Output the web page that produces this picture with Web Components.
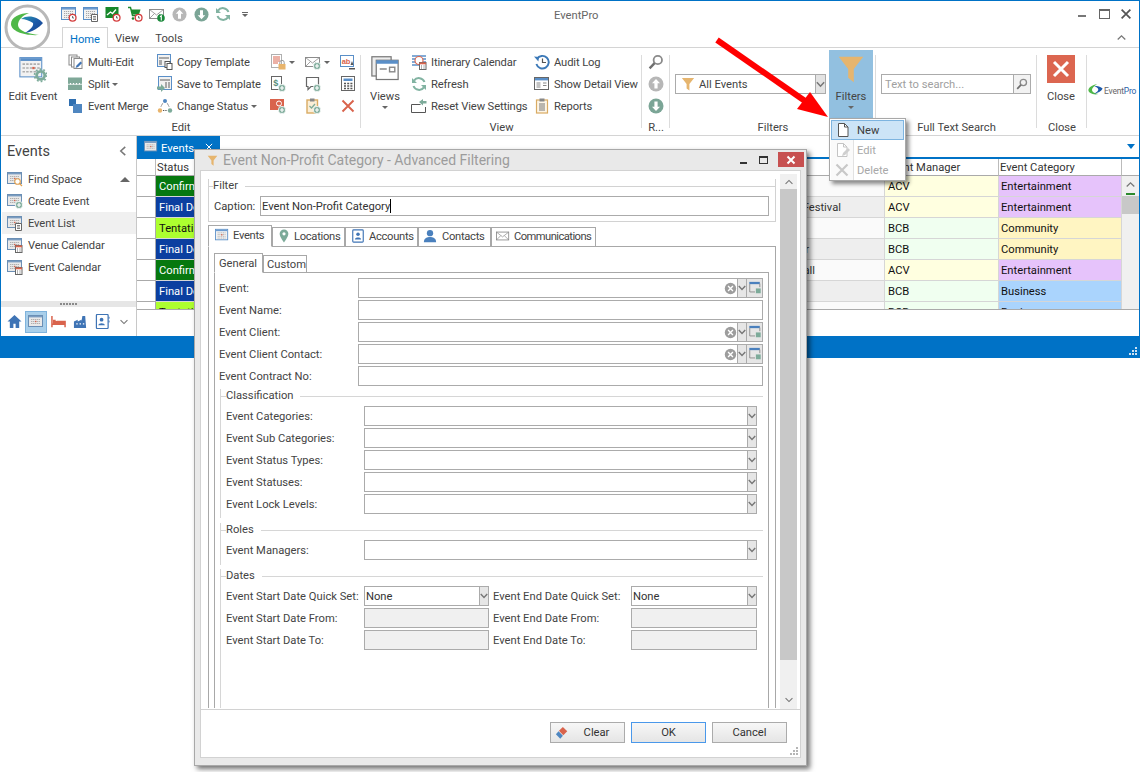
<!DOCTYPE html>
<html>
<head>
<meta charset="utf-8">
<title>EventPro</title>
<style>
  html, body { margin: 0; padding: 0; background: #fff; }
  body { width: 1140px; height: 772px; position: relative; overflow: hidden;
    font: 11.2px Roboto, "Liberation Sans", sans-serif; color: #3c3c3c; }
</style>
</head>
<body>

<ep-app>
  <ep-qat slot="qat"></ep-qat>
  <ep-ribbon slot="ribbon">
    <ep-group label="Edit" style="width:360px">
      <ep-big icon="editEvent" style="width:64px">Edit Event</ep-big>
      <ep-col style="width:89px;margin-left:3px">
        <ep-rb icon="multiEdit">Multi-Edit</ep-rb>
        <ep-rb icon="split" caret>Split</ep-rb>
        <ep-rb icon="merge">Event Merge</ep-rb>
      </ep-col>
      <ep-col style="width:113px">
        <ep-rb icon="copyTpl">Copy Template</ep-rb>
        <ep-rb icon="saveTpl">Save to Template</ep-rb>
        <ep-rb icon="status" caret>Change Status</ep-rb>
      </ep-col>
      <ep-col style="width:35px">
        <ep-rb icon="docLock" caret></ep-rb>
        <ep-rb icon="moneyPlus"></ep-rb>
        <ep-rb icon="cardPlus"></ep-rb>
      </ep-col>
      <ep-col style="width:35px">
        <ep-rb icon="mailPlus" caret></ep-rb>
        <ep-rb icon="commentPlus"></ep-rb>
        <ep-rb icon="clipPlus"></ep-rb>
      </ep-col>
      <ep-col style="width:18px">
        <ep-rb icon="spell"></ep-rb>
        <ep-rb icon="calc"></ep-rb>
        <ep-rb icon="redX"></ep-rb>
      </ep-col>
    </ep-group>
    <ep-group label="View" style="width:281px">
      <ep-big icon="views" caret style="width:48px">Views</ep-big>
      <ep-col style="width:123px;margin-left:2px">
        <ep-rb icon="itinerary">Itinerary Calendar</ep-rb>
        <ep-rb icon="refresh">Refresh</ep-rb>
        <ep-rb icon="reset">Reset View Settings</ep-rb>
      </ep-col>
      <ep-col style="width:100px">
        <ep-rb icon="audit">Audit Log</ep-rb>
        <ep-rb icon="detail">Show Detail View</ep-rb>
        <ep-rb icon="reports">Reports</ep-rb>
      </ep-col>
    </ep-group>
    <ep-group label="R..." style="width:28px">
      <ep-col style="width:16px;margin-left:6px">
        <ep-rb icon="search"></ep-rb>
        <ep-rb icon="up"></ep-rb>
        <ep-rb icon="down"></ep-rb>
      </ep-col>
    </ep-group>
    <ep-group label="Filters" style="width:206px">
      <ep-combo style="margin:23px 0 0 5px;width:151px"></ep-combo>
      <ep-big icon="funnelBig" caret active style="width:44px;height:71px;margin:-1px 0 0 3px">Filters</ep-big>
    </ep-group>
    <ep-group label="Full Text Search" style="width:161px">
      <ep-search style="margin:23px 0 0 5px;width:150px"></ep-search>
    </ep-group>
    <ep-group label="Close" style="width:50px">
      <ep-big icon="closeBig" style="width:50px;margin-left:-1px">Close</ep-big>
    </ep-group>
    <ep-brand></ep-brand>
  </ep-ribbon>
  <ep-nav slot="nav">
    <ep-nav-item icon="navFind">Find Space<ep-tri slot="end"></ep-tri></ep-nav-item>
    <ep-nav-item icon="navCreate">Create Event</ep-nav-item>
    <ep-nav-item icon="navList" selected>Event List</ep-nav-item>
    <ep-nav-item icon="navCal">Venue Calendar</ep-nav-item>
    <ep-nav-item icon="navCal">Event Calendar</ep-nav-item>
  </ep-nav>
  <ep-grid slot="main"></ep-grid>
</ep-app>

<ep-dialog>
  <ep-legend-group label="Filter" style="margin-top:8px;width:568px;margin-left:7px" closed>
    <div style="display:flex;align-items:center;height:20px;padding-left:5px;padding-bottom:5px">
      <span style="width:46px">Caption:</span>
      <ep-input value="Event Non-Profit Category" cursor style="width:509px"></ep-input>
    </div>
  </ep-legend-group>

  <ep-tabs outer style="margin:3px 0 0 7px;width:568px;height:483px">
    <ep-tab slot="tabs" active icon="tabCal" style="width:64px;--pad:6px;--gap:4px">Events</ep-tab>
    <ep-tab slot="tabs" icon="tabPin" style="width:73px;--pad:4px;--gap:3px">Locations</ep-tab>
    <ep-tab slot="tabs" icon="tabCard" style="width:73px;--pad:5px;--gap:4px">Accounts</ep-tab>
    <ep-tab slot="tabs" icon="tabUser" style="width:73px;--pad:4px;--gap:5px">Contacts</ep-tab>
    <ep-tab slot="tabs" icon="mail" style="width:105px;--pad:4px;--gap:4px;letter-spacing:-.55px">Communications</ep-tab>

    <ep-tabs style="margin:6px 0 0 5px;width:555px;height:456px">
      <ep-tab slot="tabs" active style="width:49px;--pad:4px;--pb:0px;letter-spacing:0">General</ep-tab>
      <ep-tab slot="tabs" style="width:44px;--pad:3px;--pb:0px;letter-spacing:0">Custom</ep-tab>

      <div style="padding:5px 5px 0 4px">
        <ep-field label="Event:" w="139" kind="lookup"></ep-field>
        <ep-field label="Event Name:" w="139"></ep-field>
        <ep-field label="Event Client:" w="139" kind="lookup"></ep-field>
        <ep-field label="Event Client Contact:" w="139" kind="lookup"></ep-field>
        <ep-field label="Event Contract No:" w="139"></ep-field>

        <ep-legend-group label="Classification" inner style="margin-top:1px">
          <ep-field label="Event Categories:" w="138" kind="combo"></ep-field>
          <ep-field label="Event Sub Categories:" w="138" kind="combo"></ep-field>
          <ep-field label="Event Status Types:" w="138" kind="combo"></ep-field>
          <ep-field label="Event Statuses:" w="138" kind="combo"></ep-field>
          <ep-field label="Event Lock Levels:" w="138" kind="combo"></ep-field>
          <div style="height:2px"></div>
        </ep-legend-group>
        <ep-legend-group label="Roles" inner style="margin-top:5px">
          <ep-field label="Event Managers:" w="138" kind="combo"></ep-field>
          <div style="height:3px"></div>
        </ep-legend-group>
        <ep-legend-group label="Dates" inner style="margin-top:4px;height:200px">
          <div style="display:grid;grid-template-columns:263px 264px;column-gap:4px">
            <ep-field label="Event Start Date Quick Set:" w="138" kind="combo" value="None"></ep-field>
            <ep-field label="Event End Date Quick Set:" w="138" kind="combo" value="None"></ep-field>
            <ep-field label="Event Start Date From:" w="138" disabled></ep-field>
            <ep-field label="Event End Date From:" w="138" disabled></ep-field>
            <ep-field label="Event Start Date To:" w="138" disabled></ep-field>
            <ep-field label="Event End Date To:" w="138" disabled></ep-field>
          </div>
        </ep-legend-group>
      </div>
    </ep-tabs>
  </ep-tabs>

  <ep-button slot="buttons" icon="eraser">Clear</ep-button>
  <ep-button slot="buttons" primary>OK</ep-button>
  <ep-button slot="buttons">Cancel</ep-button>
</ep-dialog>

<ep-arrow></ep-arrow>
<ep-menu></ep-menu>

<script>
// icon pieces, all drawn on a 16x16 box
const calBase = '<rect x=".5" y="1.5" width="14" height="12" fill="#f2f2f2" stroke="#5a8fc8"/><rect x="1" y="2" width="13" height="1.6" fill="#6b9bd0"/><path d="M3 5.5h9M3 7.5h9M3 9.5h9M3 11.5h9" stroke="#a9a9a9" stroke-dasharray="1.2 .8"/>';
const clock = '<circle cx="11.6" cy="11.8" r="3.4" fill="#fff" stroke="#d43c3c" stroke-width="1.3"/><path d="M11.6 10v2h1.4" stroke="#444" fill="none" stroke-width=".8"/>';
const plus = '<circle cx="12" cy="12" r="3.7" fill="#7dab9a" stroke="#fff" stroke-width=".8"/><path d="M12 9.8v4.4M9.8 12h4.4" stroke="#fff" stroke-width="1.2"/>';
const docSmall = '<path d="M8.5 8.5h6v7h-6z" fill="#fff" stroke="#666"/><path d="M10 10.5h3M10 12h3M10 13.5h3" stroke="#666" stroke-width=".8"/>';
const calSmall = '<rect x="8.5" y="8.5" width="6.5" height="7" fill="#fff" stroke="#666"/><rect x="8.5" y="8.5" width="6.5" height="1.8" fill="#d9634c"/><path d="M10 12h1M12.5 12h1M10 14h1M12.5 14h1" stroke="#666"/>';
const navBase = '<rect x=".5" y="1.5" width="14" height="11" fill="#e9e9e9" stroke="#6b8fb5"/><rect x="1" y="2" width="13" height="1.4" fill="#7a9cc0"/><path d="M3 5.5h9M3 7.5h9M3 9.5h9" stroke="#b0b0b0" stroke-dasharray="1.4 .6"/><rect x="7" y="6.8" width="1.4" height="1.4" fill="#d9634c"/>';
const envelope = '<rect x=".5" y="3.5" width="14" height="9" fill="#fff" stroke="#8c8c8c"/><path d="M.5 3.5l7 5.5 7-5.5M.5 12.5l5-5M14.5 12.5l-5-5" fill="none" stroke="#8c8c8c" stroke-width=".8"/>';
const funnel = '<path d="M1 1h14L9.6 8v7.5L6.4 13V8z" fill="#e6b56e"/>';
const circArrow = (c, d) => `<circle cx="8" cy="8" r="7.5" fill="${c}"/><path d="${d}" fill="#fff"/>`;

const ICONS = {
  qCalClock: calBase + clock,
  qCalDoc: calBase + docSmall,
  qChart: '<rect x=".5" y="1" width="13" height="11" fill="#17882b"/><path d="M2 9l3.5-3 2 1.5L11 3.5" fill="none" stroke="#fff" stroke-width="1.3"/>' + clock,
  qCart: '<path d="M1 1.5h2.5l2 8h7" fill="none" stroke="#1c8a2e" stroke-width="1.4"/><path d="M4 3.5h9.5l-1.5 5H5.4z" fill="#1c8a2e"/><circle cx="6" cy="12.5" r="1.3" fill="#1c8a2e"/>' + clock,
  qMail: envelope + '<circle cx="12" cy="12" r="3.8" fill="#1c8a3c"/><path d="M11 10.8l1.3-1v4.6" fill="none" stroke="#fff" stroke-width="1.1"/>',
  up: circArrow('#b7b7b7', 'M8 3l4 4.2H9.6V12.5H6.4V7.2H4z'),
  down: circArrow('#7ba596', 'M8 13L4 8.8h2.4V3.5h3.2v5.3H12z'),
  refresh: '<path d="M13.5 6A6 6 0 0 0 3 4.6M2.5 10A6 6 0 0 0 13 11.4" fill="none" stroke="#82b3a2" stroke-width="2"/><path d="M1 2v5h5zM15 14V9h-5z" fill="#82b3a2"/>',
  editEvent: '<rect x=".5" y="1.5" width="12.5" height="11" fill="#f2f2f2" stroke="#5a8fc8" stroke-width=".6"/><rect x=".8" y="1.8" width="12" height="1.6" fill="#5a8fc8"/><path d="M2 5.2h10M2 7.4h10M2 9.6h10" stroke="#aeaeae" stroke-dasharray="1.4 .7" stroke-width=".9"/><rect x="7.6" y="6.8" width="1.3" height="1.3" fill="#d9634c"/><circle cx="12.4" cy="11.6" r="2.3" fill="none" stroke="#7dab9a" stroke-width="1.6"/><circle cx="12.4" cy="11.6" r="3.5" fill="none" stroke="#7dab9a" stroke-width="1" stroke-dasharray="1 1.2"/>',
  multiEdit: '<rect x="1" y="1" width="8" height="10" fill="#fff" stroke="#8a8a8a"/><rect x="3.5" y="3" width="8" height="10" fill="#fff" stroke="#8a8a8a"/><rect x="6" y="4.5" width="8" height="10" fill="#fff" stroke="#8a8a8a"/><path d="M7.5 14l1-2.6L12.5 7.5l1.6 1.6-4 4z" fill="#3f74b5"/>',
  split: '<rect y="1.5" width="14" height="5.5" fill="#7fa898"/><rect y="8.5" width="14" height="5.5" fill="#7fa898"/><rect y="7" width="14" height="1.5" fill="#fff"/><path d="M0 7.7h14" stroke="#7fa898" stroke-dasharray="2 1"/>',
  merge: '<rect x="1" y="1" width="7" height="7" fill="#2f6fb0"/><rect x="5" y="6" width="9" height="9" fill="#4f86c0"/>',
  copyTpl: '<rect x=".5" y=".5" width="13" height="12" fill="#f2f2f2" stroke="#5a8fc8"/><path d="M2 3h10v2H2zM2 6h3v5H2z" fill="#a8a8a8"/><rect x="8" y="7.5" width="5" height="6" fill="#fff" stroke="#555"/><rect x="10" y="9.5" width="5" height="6" fill="#fff" stroke="#555"/>',
  saveTpl: '<rect x="1.5" y=".5" width="13" height="13" fill="#f2f2f2" stroke="#5a8fc8"/><path d="M3 3h10v2H3zM8 6h2v6H8zM11 6h2v6h-2z" fill="#a8a8a8"/><path d="M0 10.5h4V8l4 4-4 4v-2.5H0z" fill="#7dab9a"/>',
  status: '<circle cx="8" cy="3" r="2" fill="#4f86c0"/><circle cx="3" cy="12.5" r="2.2" fill="#e8b46c"/><circle cx="13" cy="12.5" r="2.2" fill="#7dab9a"/><path d="M5.6 5.5L4 8.5M10.4 5.5L12 8.5M6 12.5h4" stroke="#555" stroke-dasharray="1.3 1"/>',
  docLock: '<rect x="1.5" y=".5" width="10" height="13" fill="#fff" stroke="#b0b0b0"/><path d="M3 3h7M3 5h7M3 7h7M3 9h5" stroke="#d9634c"/><path d="M9.8 10V8.5a2.2 2.2 0 0 1 4.4 0V10" fill="none" stroke="#999"/><rect x="8.5" y="10" width="7" height="5.5" fill="#e8b46c"/>',
  moneyPlus: '<rect x="1.5" y=".5" width="10" height="13" fill="#fff" stroke="#666"/><text x="3.3" y="10" font-size="9" font-family="Liberation Sans" font-weight="bold" fill="#5a8f7c">$</text>' + plus,
  cardPlus: '<rect y="1" width="14" height="11" fill="#d9634c"/><circle cx="9" cy="5.5" r="2.5" fill="none" stroke="#fff"/>' + plus,
  mailPlus: envelope + plus,
  commentPlus: '<path d="M1.5 1.5h12v9H6l-3 3v-3H1.5z" fill="#fff" stroke="#666" stroke-width="1.2"/>' + plus,
  clipPlus: '<rect x="2" y="2" width="10.5" height="13" fill="#fbeed6" stroke="#d9ab63" stroke-width="1.4"/><rect x="5" y=".5" width="4.5" height="3" fill="#888"/><path d="M4.5 8l2 2 3.5-4" fill="none" stroke="#7dab9a" stroke-width="1.3"/>' + plus,
  spell: '<rect x=".5" y="1.5" width="13" height="11" fill="#fff" stroke="#5a8fc8"/><text x="1.8" y="9.5" font-size="7.5" font-family="Liberation Sans" font-weight="bold" fill="#d9634c">ab</text><path d="M12 7l-1.5 4h3zM9 14h6v1.5H9z" fill="#555"/>',
  calc: '<rect x="1.5" y=".5" width="13" height="14" fill="#fff" stroke="#666"/><rect x="3.5" y="2.5" width="9" height="2.5" fill="#5a8fc8"/><path d="M4 7.5h2M7.2 7.5h2M10.4 7.5h2M4 10h2M7.2 10h2M10.4 10h2M4 12.5h2M7.2 12.5h2M10.4 12.5h2" stroke="#555" stroke-width="1.4"/>',
  redX: '<path d="M2.5 2.5l11 11M13.5 2.5l-11 11" stroke="#d9634c" stroke-width="1.9"/>',
  views: '<rect x=".5" y="1" width="11" height="11" fill="#eee" stroke="#777" stroke-width=".7"/><rect x="3" y="3" width="12.5" height="11" fill="#fff" stroke="#777" stroke-width=".7"/><rect x="3" y="3" width="12.5" height="2" fill="#5a8fc8"/><path d="M5 8h4" stroke="#999" stroke-width="1"/><rect x="10.6" y="7" width="3" height="2.6" fill="none" stroke="#888" stroke-width=".8"/>',
  itinerary: '<path d="M1 2h14M1 5h14M1 8h14M1 11h14" stroke="#5a8fc8" stroke-width="1.4"/><circle cx="8" cy="6.5" r="4" fill="#fff" stroke="#d9634c" stroke-width="1.1"/>' + calSmall,
  reset: '<path d="M.5 6.5h9M.5 6.5v8h14V9" fill="none" stroke="#555"/><path d="M8 4l4-3v2h3.5v2.5H12v2z" fill="#7dab9a"/>',
  audit: '<path d="M3 5a6.3 6.3 0 1 1-.6 5" fill="none" stroke="#3c79b8" stroke-width="1.9"/><path d="M0 2.4l5 .6-.6 4.6z" fill="#3c79b8"/><path d="M8.5 4.5v4H12" fill="none" stroke="#555" stroke-width="1.2"/>',
  detail: '<rect x=".5" y="1.5" width="14" height="12" fill="#fff" stroke="#666"/><rect x="1" y="2" width="13" height="2.4" fill="#5a8fc8"/><path d="M2.5 7h4M2.5 9h4M2.5 11h4M9 7h3.5M9 9.5h3.5" stroke="#888"/>',
  reports: '<rect x="2.5" y="2" width="11" height="13" fill="#fdf5e6" stroke="#d9ab63" stroke-width="1.2"/><rect x="5.5" y=".5" width="5" height="3" fill="#888"/><path d="M5 6h6M5 8h6M5 10h6M5 12h6" stroke="#777"/>',
  search: '<circle cx="9.8" cy="6" r="4.2" fill="none" stroke="#8a8a8a" stroke-width="1.8"/><path d="M6.6 9.2L1.6 14.4" stroke="#6f6f6f" stroke-width="2.4"/>',
  funnelBig: funnel,
  funnel,
  closeBig: '<rect width="16" height="16" fill="#dc6650"/><path d="M4 4l8 8M12 4l-8 8" stroke="#fff" stroke-width="1.7"/>',
  navFind: navBase + '<circle cx="10.5" cy="10.5" r="2.8" fill="#fff" stroke="#e0a050" stroke-width="1.1"/><path d="M12.5 12.5l2.5 2.5" stroke="#e0a050" stroke-width="1.3"/>',
  navCreate: navBase + plus,
  navList: navBase + docSmall,
  navCal: navBase + calSmall,
  navHome: '<path d="M8 1L.5 8H3v7h3.8v-4.5h2.4V15H13V8h2.5z" fill="#3f74b5"/>',
  navEvents: navBase,
  navBed: '<path d="M1 2v12M1 11h14v3M15 11V8H6" stroke="#d9634c" stroke-width="1.6" fill="none"/><path d="M5 7.5h10V11H2V6h3z" fill="#d9634c"/>',
  navPlant: '<path d="M1 15V8l4-2v2l4-2v2l1-6h3l1 13z" fill="#3f74b5"/><path d="M3.5 10.5h1.5M7 10.5h1.5M10.5 10.5h1.5" stroke="#fff" stroke-width="1.4"/>',
  navCard: '<rect x="1.5" y=".5" width="12.5" height="15" rx="1" fill="#fff" stroke="#3f74b5" stroke-width="1.3"/><circle cx="7" cy="6" r="2" fill="#3f74b5"/><path d="M3.5 12c0-3 7-3 7 0z" fill="#3f74b5"/><path d="M15 3v2M15 7v2" stroke="#3f74b5"/>',
  tabCal: calBase + '<rect x="7" y="7" width="1.5" height="1.5" fill="#d9634c"/>',
  tabPin: '<path d="M8 .5a5 5 0 0 0-5 5c0 3.5 5 10 5 10s5-6.5 5-10a5 5 0 0 0-5-5z" fill="#7dab9a"/><circle cx="8" cy="5.5" r="1.8" fill="#fff"/>',
  tabCard: '<rect x="2" y="1" width="12" height="14" rx="1" fill="#fff" stroke="#3f74b5" stroke-width="1.3"/><circle cx="8" cy="6" r="2" fill="#3f74b5"/><path d="M4.5 12c0-3 7-3 7 0z" fill="#3f74b5"/>',
  tabUser: '<circle cx="8" cy="4.8" r="3.6" fill="#4a80bd"/><path d="M1 15c0-5 4-6 7-6s7 1 7 6z" fill="#4a80bd"/>',
  mail: envelope,
  eraser: '<path d="M9 1l5 5-4.5 4.5-5-5z" fill="#d9634c"/><path d="M4 6l5 5-3 3.5-5-5z" fill="#4f86c0"/>',
  doc: '<path d="M3.5 1.5h6l3.5 3.5v9.500H3.500z" fill="#fff" stroke="#555"/><path d="M9.5 1.5V5H13" fill="none" stroke="#555"/>',
  docEdit: '<path d="M3.5 1.5h6l3.5 3.5v9.500H3.500z" fill="#fff" stroke="#c4c4c4"/><path d="M9.5 1.5V5H13" fill="none" stroke="#c4c4c4"/><path d="M8 14l1-3 5-5 2 2-5 5z" fill="#cfcfcf"/>',
  grayX: '<path d="M2.5 2.5l11 11M13.5 2.5l-11 11" stroke="#c8c8c8" stroke-width="2.2"/>',
  windowPick: '<rect x="1.5" y="1" width="12" height="2.6" fill="#4a80bd"/><path d="M2 3.5v9h6" fill="none" stroke="#888"/><path d="M13.5 3v4" stroke="#888"/><rect x="9" y="8.5" width="5.5" height="5.5" fill="#7dab9a"/>',
  clearX: '<circle cx="8" cy="8" r="7" fill="#9d9d9d"/><path d="M5 5l6 6M11 5l-6 6" stroke="#fff" stroke-width="1.7"/>',
  chevDown: '<path d="M2.5 5L8 10.5 13.5 5" fill="none" stroke="#777" stroke-width="1.8"/>',
  chevThick: '<path d="M1.5 4L8 11 14.500 4" fill="none" stroke="#777" stroke-width="2.8"/>',
  chevUp: '<path d="M2.5 11L8 5.5 13.5 11" fill="none" stroke="#777" stroke-width="1.8"/>',
  chevLeft: '<path d="M11 2.5L5 8l6 5.5" fill="none" stroke="#777" stroke-width="2"/>',
  winClose: '<path d="M3 3l10 10M13 3L3 13" stroke="#555" stroke-width="2"/>',
  tabClose: '<path d="M3 3l10 10M13 3L3 13" stroke="#fff" stroke-width="1.6"/>'
};

const LOGO = '<svg width="46" height="46" viewBox="4 4 46 46"><defs><linearGradient id="lg" x1="0" y1="0" x2="1" y2="1"><stop offset="0" stop-color="#2b9bb0"/><stop offset=".5" stop-color="#1d5aa8"/><stop offset="1" stop-color="#173f8c"/></linearGradient></defs><circle cx="27.500" cy="27.500" r="21.500" fill="#fff" stroke="#b8b8b8" stroke-width="3"/><path d="M29 13C20 13 11 17 11 24c0 7 13 12 28 11-10-1-21-4-21-10 0-5 5-10 11-12z" fill="#4fb848"/><path d="M21 19c7-5 17-2 22 4-4 5-11 9-18 10 5-3 9-7 8-10-3-2-8-4-12-4z" fill="url(#lg)"/></svg>';

function define(name, markup, init) {
  customElements.define(name, class extends HTMLElement {
    constructor() {
      super();
      this.attachShadow({mode: "open"});
    }
    connectedCallback() {
      if (this.done) return;
      this.done = true;
      this.shadowRoot.innerHTML = typeof markup === "function" ? markup(this) : markup;
      if (init) init(this);
    }
  });
}

define("ep-icon", el => {
  const s = el.getAttribute("size") || 16;
  return `<style>:host{display:inline-flex;flex:none}svg{display:block}</style>
    <svg width="${s}" height="${s}" viewBox="0 0 16 16">${ICONS[el.getAttribute("name")] || ""}</svg>`;
});

define("ep-tri", `<style>:host{display:block;width:0;height:0;border:5px solid transparent;border-top:0;border-bottom:5px solid #666;margin-right:6px}</style>`);

define("ep-caret", `<style>:host{display:inline-block;width:0;height:0;border:3px solid transparent;border-bottom:0;border-top:3px solid #666}</style>`);

define("ep-app", `
  <style>
    :host { display: flex; flex-direction: column; width: 1140px; height: 358px; box-sizing: border-box;
      border: 1px solid #0072c6; border-bottom: 0; position: relative; }
    .logo { position: absolute; left: 3px; top: 3px; z-index: 2; height: 46px; }
    .top { height: 27px; display: flex; align-items: center; }
    .title { color: #666; white-space: nowrap; padding-top: 2px; }
    .wc { margin-left: auto; display: flex; align-items: center; gap: 8px; padding-right: 6px; }
    .tabs { height: 20px; display: flex; border-bottom: 1px solid #d4d4d4; padding-left: 61px; position: relative; }
    .tab { display: flex; align-items: center; justify-content: center; color: #444; padding-top: 2px; box-sizing: border-box; }
    .on { height: 21px; border: 1px solid #d4d4d4; border-bottom: 0; background: #fff; color: #0072c6; }
    .fold { margin-left: auto; margin-right: 12px; display: flex; align-items: center; }
    .body { height: 200px; display: flex; }
    .status { height: 22px; margin: 0 -1px; background: #0072c6; position: relative; }
    .grip { position: absolute; right: 2px; bottom: 2px; }
    slot[name=main] { display: block; }
  </style>
  <div class="logo">${LOGO}</div>
  <div class="top">
    <slot name="qat"></slot>
    <div class="title">EventPro</div>
    <div class="wc">
      <svg width="14" height="14"><rect x="3" y="8" width="8" height="2" fill="#777"/></svg>
      <svg width="14" height="14"><rect x="2.500" y="2.500" width="10" height="9" fill="none" stroke="#666"/><rect x="2" y="2" width="11" height="2" fill="#666"/></svg>
      <ep-icon name="winClose" size="14"></ep-icon>
    </div>
  </div>
  <div class="tabs">
    <div class="tab on" style="width:46px">Home</div>
    <div class="tab" style="width:38px">View</div>
    <div class="tab" style="width:46px">Tools</div>
    <div class="fold"><ep-icon name="chevUp" size="11"></ep-icon></div>
  </div>
  <slot name="ribbon"></slot>
  <div class="body">
    <slot name="nav"></slot>
    <slot name="main"></slot>
  </div>
  <div class="status">
    <svg class="grip" width="9" height="9" fill="#cfe2f3"><path d="M6 0h2v2H6zM3 3h2v2H3zM6 3h2v2H6zM0 6h2v2H0zM3 6h2v2H3zM6 6h2v2H6z"/></svg>
  </div>
`);

define("ep-qat", el => {
  const names = ["qCalClock", "qCalDoc", "qChart", "qCart", "qMail", "up", "down", "refresh"];
  return `<style>
      :host { display: flex; align-items: center; width: 553px; box-sizing: border-box; padding-left: 57px; }
      span { width: 22px; display: flex; justify-content: center; }
      .more { display: flex; flex-direction: column; align-items: center; gap: 1px; }
      .more i { display: block; width: 6px; height: 1px; background: #666; }
    </style>
    ${names.map(n => `<span><ep-icon name="${n}" size="${n === "up" || n === "down" ? 15 : 16}"></ep-icon></span>`).join("")}
    <span class="more"><i></i><ep-caret></ep-caret></span>`;
});

define("ep-ribbon", `
  <style>:host { display: flex; height: 88px; box-sizing: border-box; border-bottom: 1px solid #d4d4d4; }</style>
  <slot></slot>
`);

define("ep-group", el => `
  <style>
    :host { display: flex; flex-direction: column; flex: none; height: 87px; box-sizing: border-box; padding-top: 3px; position: relative; }
    :host::after { content: ""; position: absolute; right: 0; top: 7px; bottom: 7px; width: 1px; background: #dcdcdc; }
    .c { height: 67px; display: flex; align-items: flex-start; }
    .l { height: 17px; line-height: 19px; text-align: center; color: #444; white-space: nowrap; overflow: hidden; }
  </style>
  <div class="c"><slot></slot></div>
  <div class="l">${el.getAttribute("label")}</div>
`);

define("ep-col", `<style>:host { display: flex; flex-direction: column; flex: none; }</style><slot></slot>`);

define("ep-rb", el => {
  const hasText = el.textContent.trim() !== "";
  return `<style>
    :host { display: flex; align-items: center; height: 22px; gap: 4px; white-space: nowrap; color: #444; letter-spacing: -.12px; }
    .t { padding-top: 1px; }
    ep-caret { margin-left: -1px; }
  </style>
  <ep-icon name="${el.getAttribute("icon")}"></ep-icon>
  ${hasText ? '<span class="t"><slot></slot></span>' : ""}
  ${el.hasAttribute("caret") ? "<ep-caret></ep-caret>" : ""}`;
});

define("ep-big", el => `
  <style>
    :host { display: flex; flex-direction: column; align-items: center; flex: none; box-sizing: border-box; color: #444; white-space: nowrap;
      padding-top: 4px; ${el.hasAttribute("active") ? "background:#92c0e0;padding-top:5px;" : ""} }
    .t { margin-top: 7px; height: 14px; line-height: 14px; }
    ep-caret { margin-top: 2px; }
  </style>
  <ep-icon name="${el.getAttribute("icon")}" size="28"></ep-icon>
  <div class="t"><slot></slot></div>
  ${el.hasAttribute("caret") ? "<ep-caret></ep-caret>" : ""}
`);

define("ep-combo", `
  <style>
    :host { display: flex; align-items: center; box-sizing: border-box; height: 20px; flex: none; border: 1px solid #ababab; color: #444; }
    ep-icon { margin: 0 4px 0 5px; }
    span { flex: 1; }
    .b { width: 9px; height: 18px; background: #e3e3e3; border-left: 1px solid #ababab; display: flex; align-items: center; }
  </style>
  <ep-icon name="funnel" size="14"></ep-icon><span>All Events</span>
  <div class="b"><ep-icon name="chevThick" size="9" style="margin:0"></ep-icon></div>
`);

define("ep-search", `
  <style>
    :host { display: flex; align-items: center; box-sizing: border-box; height: 20px; flex: none; border: 1px solid #ababab; color: #a0a0a0; }
    span { flex: 1; padding-left: 3px; }
    .b { width: 16px; height: 18px; background: #f2f2f2; border-left: 1px solid #ababab; display: flex; align-items: center; justify-content: center; }
  </style>
  <span>Text to search...</span>
  <div class="b"><ep-icon name="search" size="12"></ep-icon></div>
`);

define("ep-brand", `
  <style>
    :host { display: flex; align-items: center; height: 71px; padding-left: 1px; flex: none; margin-top: 7px; gap: 1px; }
    b { font: 400 8.500px Roboto, sans-serif; letter-spacing: -.2px; color: #666; }
    b i { font-style: normal; color: #2b62a8; }
  </style>
  <svg width="15" height="15" viewBox="8 8 38 38"><path d="M31 11C19 13 9 19 9 26c0 8 13 13 25 10C24 34 18 31 18 26c0-5 6-12 13-15z" fill="#4fb848"/><path d="M24 16c8-2 15 1 21 6-3 7-13 12-21 13 6-3 11-8 10-11-1-4-5-7-10-8z" fill="#1d5aa8"/></svg>
  <b>Event<i>Pro</i></b>
`);

define("ep-nav", `
  <style>
    :host { display: flex; flex-direction: column; width: 136px; height: 200px; box-sizing: border-box; border-right: 1px solid #c8c8c8; flex: none; }
    .h { display: flex; align-items: center; justify-content: space-between; height: 32px; box-sizing: border-box; padding: 0 7px 2px 6px; font-size: 14.500px; color: #444; flex: none; }
    .list { flex: 1; }
    .dots { height: 6px; background: #e6e6e6; display: flex; justify-content: center; align-items: center; gap: 1px; }
    .dots i { width: 2px; height: 2px; background: #8a8a8a; }
    .bar { height: 29px; display: flex; align-items: center; padding-left: 2px; }
    .bar span { width: 22px; height: 22px; display: flex; align-items: center; justify-content: center; box-sizing: border-box; }
    .bar .on { background: #a9cfea; border: 1px solid #7fb3dc; }
  </style>
  <div class="h"><span>Events</span><ep-icon name="chevLeft" size="12"></ep-icon></div>
  <div class="list"><slot></slot></div>
  <div class="dots"><i></i><i></i><i></i><i></i><i></i><i></i></div>
  <div class="bar">
    <span><ep-icon name="navHome" size="15"></ep-icon></span>
    <span class="on"><ep-icon name="navEvents" size="16"></ep-icon></span>
    <span><ep-icon name="navBed" size="15"></ep-icon></span>
    <span><ep-icon name="navPlant" size="15"></ep-icon></span>
    <span><ep-icon name="navCard" size="15"></ep-icon></span>
    <span><ep-icon name="chevDown" size="10"></ep-icon></span>
  </div>
`);

define("ep-nav-item", el => `
  <style>
    :host { display: flex; align-items: center; height: 22px; margin-left: 1px; padding-left: 5px; gap: 5px; color: #444; letter-spacing: -.12px;
      ${el.hasAttribute("selected") ? "background:#f0f0f0;" : ""} }
    .end { margin-left: auto; }
  </style>
  <ep-icon name="${el.getAttribute("icon")}"></ep-icon><slot></slot>
  <div class="end"><slot name="end"></slot></div>
`);

define("ep-grid", el => {
  const ST = {
    c: ["Confirm", "#06780f", "#fff"],
    f: ["Final De", "#0b3fa0", "#fff"],
    t: ["Tentati", "#adff2f", "#111"]
  };
  const CAT = { E: ["Entertainment", "#e6c3fb"], C: ["Community", "#fff5c2"], B: ["Business", "#aad4fd"] };
  const MGR = { A: ["ACV", "#ffffe0"], B: ["BCB", "#f0fff0"] };
  // row: status, visible end of the name, right offset of that text, manager, category
  const rows = [
    ["c", "t", 77, "A", "E"], ["f", "Festival", 43, "A", "E"], ["t", "", 0, "B", "C"],
    ["f", "r", 75, "B", "C"], ["c", "all", 69, "A", "E"], ["f", "n", 77, "B", "B"], ["t", "", 0, "B", "B"]
  ];
  const cells = rows.map((r, i) => {
    const s = ST[r[0]], m = MGR[r[3]], c = CAT[r[4]], alt = i % 2 ? "#eeeeee" : "#fafafa";
    return `<div class="c ind"></div>
      <div class="c" style="background:${s[1]};color:${s[2]}">${s[0]}</div>
      <div class="c nm" style="background:${alt};padding-right:${r[2]}px">${r[1]}</div>
      <div class="c" style="background:${m[1]}">${m[0]}</div>
      <div class="c" style="background:${c[1]};padding-left:2px">${c[0]}</div>`;
  }).join("");
  return `<style>
      :host { display: flex; flex-direction: column; width: 1002px; height: 200px; color: #111; }
      .strip { height: 23px; box-sizing: border-box; display: flex; align-items: flex-end; border-bottom: 2px solid #0072c6; flex: none; position: relative; }
      .tab { width: 83px; height: 21px; background: #0072c6; color: #fff; display: flex; align-items: center; box-sizing: border-box; padding-left: 7px; gap: 3px; }
      .tab span { padding-top: 3px; }
      .tab .cl { margin-left: auto; margin-right: 6px; }
      .more { margin-left: auto; align-self: center; width: 0; height: 0; border: 4px solid transparent; border-bottom: 0; border-top: 5px solid #0072c6; margin-right: 4px; }
      .g { display: grid; grid-template-columns: 19px 104px 625px 114px 123px 17px; grid-auto-rows: 21px; grid-template-rows: 17px; height: 151px; overflow: hidden; border-bottom: 1px solid #aaa; box-sizing: border-box; flex: none; }
      .hd { border-right: 1px solid #bbb; border-bottom: 1px solid #aaa; padding-left: 1px; line-height: 18px; color: #333; white-space: nowrap; }
      .c { border-right: 1px solid #d6d6d6; border-bottom: 1px solid #d6d6d6; padding-left: 3px; padding-top: 1px; line-height: 20px; white-space: nowrap; overflow: hidden; grid-column: auto; }
      .ind { padding: 0; border-right-color: #aaa; border-bottom-color: #aaa; background: #fff; }
      .nm { text-align: right; padding-left: 0; color: #333; }
      .sb { grid-column: 6; grid-row: 2 / span 7; background: #f0f0f0; display: flex; flex-direction: column; align-items: center; }
      .sb .tick { width: 9px; height: 2px; background: #2c8a2c; margin-top: 3px; }
      .sb .th { width: 100%; height: 18px; background: #c8c8c8; margin-top: 1px; }
      .sb .dn { margin-top: 94px; }
      .sb .up { margin-top: 3px; }
    </style>
    <div class="strip">
      <div class="tab"><ep-icon name="navEvents" size="14"></ep-icon><span>Events</span><ep-icon class="cl" name="tabClose" size="10"></ep-icon></div>
      <div class="more"></div>
    </div>
    <div class="g">
      <div class="hd"></div><div class="hd">Status</div><div class="hd"></div>
      <div class="hd">Event Manager</div><div class="hd">Event Category</div><div class="hd" style="border-right:0"></div>
      ${cells}
      <div class="sb" style="grid-row:2/span 7"><ep-icon class="up" name="chevUp" size="11"></ep-icon><i class="tick"></i><i class="th"></i><ep-icon class="dn" name="chevDown" size="11"></ep-icon></div>
    </div>`;
});

define("ep-dialog", `
  <style>
    :host { position: absolute; left: 194px; top: 149px; width: 613px; height: 617px; box-sizing: border-box; z-index: 5;
      background: #e9e9e9; border: 1px solid #a8a8a8; box-shadow: 3px 3px 5px rgba(0,0,0,.55);
      padding: 0 5px 7px; display: flex; flex-direction: column; }
    .cap { height: 20px; display: flex; align-items: center; padding-left: 7px; flex: none; }
    .cap .t { font-size: 14px; color: #9c9c9c; margin-left: 5px; white-space: nowrap; }
    .wc { margin-left: auto; display: flex; align-items: center; margin-right: -3px; gap: 0; height: 16px; }
    .wc svg { margin-right: 8px; }
    .x { width: 26px; height: 15px; background: #c75050; display: flex; align-items: center; justify-content: center; margin-top: -1px; }
    .in { flex: 1; background: #fff; border: 1px solid #d2d2d2; display: flex; flex-direction: column; min-height: 0; }
    .mid { height: 538px; display: flex; border-bottom: 1px solid #d2d2d2; flex: none; }
    .form { width: 579px; overflow: hidden; flex: none; }
    .sb { width: 17px; margin-top: 3px; background: #f0f0f0; display: flex; flex-direction: column; align-items: center; }
    .sb .th { width: 100%; height: 471px; background: #c8c8c8; margin-top: 2px; }
    .sb .dn { margin-top: auto; margin-bottom: 4px; }
    .sb .up { margin-top: 3px; }
    .foot { flex: 1; display: flex; gap: 6px; justify-content: flex-end; padding: 12px 13px 0 0; position: relative; }
    .grip { position: absolute; right: 1px; bottom: 1px; }
  </style>
  <div class="cap">
    <ep-icon name="funnel" size="11"></ep-icon>
    <span class="t">Event Non-Profit Category - Advanced Filtering</span>
    <div class="wc">
      <svg width="12" height="10"><rect x="2" y="7" width="7" height="2" fill="#333"/></svg>
      <svg width="12" height="10"><rect x="1.500" y="1.500" width="8" height="7" fill="none" stroke="#333"/><rect x="1" y="1" width="9" height="2" fill="#333"/></svg>
      <div class="x"><svg width="10" height="10" style="margin:0"><path d="M1.500 1.500l7 7M8.500 1.500l-7 7" stroke="#fff" stroke-width="2"/></svg></div>
    </div>
  </div>
  <div class="in">
    <div class="mid">
      <div class="form"><slot></slot></div>
      <div class="sb"><ep-icon class="up" name="chevUp" size="10"></ep-icon><i class="th"></i><ep-icon class="dn" name="chevDown" size="10"></ep-icon></div>
    </div>
    <div class="foot">
      <slot name="buttons"></slot>
      <svg class="grip" width="9" height="9" fill="#b5b5b5"><path d="M6 0h2v2H6zM3 3h2v2H3zM6 3h2v2H6zM0 6h2v2H0zM3 6h2v2H3zM6 6h2v2H6z"/></svg>
    </div>
  </div>
`);

define("ep-legend-group", el => {
  const inner = el.hasAttribute("inner");
  const closed = el.hasAttribute("closed");
  const line = inner ? "#d6d6d6" : "#d2d2d2";
  return `<style>
    :host { display: block; box-sizing: border-box; border-left: 1px solid ${line}; border-right: 1px solid ${closed ? line : "transparent"};
      ${closed ? `border-bottom: 1px solid ${line};` : ""}
      ${inner ? "margin-left: 1px;" : ""} }
    .h { display: flex; align-items: center; height: 14px; margin-left: -1px; }
    .h i { display: block; height: 1px; background: ${line}; }
    .h i:first-child { width: ${inner ? 6 : 5}px; }
    .h i:last-child { flex: 1; margin-right: -1px; }
    .h span { padding: 0 7px 2px 0; color: #444; }
    .b { padding: 3px 5px 0 ${inner ? 5 : 0}px; }
  </style>
  <div class="h"><i></i><span>${el.getAttribute("label")}</span><i></i></div>
  <div class="b"><slot></slot></div>`;
});

define("ep-tabs", el => `
  <style>
    :host { display: flex; flex-direction: column; box-sizing: border-box; flex: none; }
    .strip { display: flex; align-items: flex-end; position: relative; z-index: 1; height: ${el.hasAttribute("outer") ? 22 : 20}px; margin-bottom: -1px; }
    .panel { flex: 1; border: 1px solid #a8a8a8; border-bottom: 0; min-height: 0; overflow: hidden; background: #fff; letter-spacing: 0; }
  </style>
  <div class="strip"><slot name="tabs"></slot></div>
  <div class="panel"><slot></slot></div>
`);

define("ep-tab", el => {
  const on = el.hasAttribute("active");
  const icon = el.getAttribute("icon");
  return `<style>
    :host { display: flex; align-items: center; box-sizing: border-box; flex: none; white-space: nowrap; color: #444; letter-spacing: -.3px;
      border: 1px solid #a8a8a8; padding-left: var(--pad, 5px); padding-bottom: var(--pb, 2px); gap: var(--gap, 4px); background: #fff;
      height: ${on ? "100%" : "calc(100% - 2px)"};
      ${on ? "border-bottom-color: #fff;" : ""} }
  </style>
  ${icon ? `<ep-icon name="${icon}" size="14"></ep-icon>` : ""}<slot></slot>`;
});

define("ep-input", el => {
  const kind = el.getAttribute("kind") || "text";
  const dis = el.hasAttribute("disabled");
  const val = el.getAttribute("value") || "";
  let side = "";
  if (kind === "combo") side = `<div class="b" style="width:9px"><ep-icon name="chevThick" size="8"></ep-icon></div>`;
  if (kind === "lookup") side = `<ep-icon name="clearX" size="13"></ep-icon>
    <div class="b" style="width:9px"><ep-icon name="chevThick" size="8"></ep-icon></div>
    <div class="b" style="width:16px"><ep-icon name="windowPick" size="14"></ep-icon></div>`;
  return `<style>
    :host { display: flex; align-items: center; box-sizing: border-box; height: 20px; flex: none; border: 1px solid #ababab;
      background: ${dis ? "#f0f0f0" : "#fff"}; color: #333; }
    .v { flex: 1; padding-left: 1px; white-space: nowrap; overflow: hidden; display: flex; align-items: center; }
    .cur { display: inline-block; width: 1px; height: 14px; background: #000; }
    .b { height: 18px; box-sizing: border-box; background: #e6e6e6; border-left: 1px solid #ababab; display: flex; align-items: center; justify-content: center; flex: none; }
  </style>
  <div class="v">${val}${el.hasAttribute("cursor") ? '<span class="cur"></span>' : ""}</div>${side}`;
});

define("ep-field", el => {
  const w = el.getAttribute("w");
  const attrs = [];
  if (el.getAttribute("kind")) attrs.push(`kind="${el.getAttribute("kind")}"`);
  if (el.getAttribute("value")) attrs.push(`value="${el.getAttribute("value")}"`);
  if (el.hasAttribute("disabled")) attrs.push("disabled");
  return `<style>
    :host { display: grid; grid-template-columns: ${w}px 1fr; align-items: center; height: 22px; color: #444; }
    .l { white-space: nowrap; padding-bottom: 2px; }
    ep-input { margin-bottom: 2px; }
  </style>
  <span class="l">${el.getAttribute("label")}</span><ep-input ${attrs.join(" ")}></ep-input>`;
});

define("ep-button", el => {
  const p = el.hasAttribute("primary");
  const ic = el.getAttribute("icon");
  return `<style>
    :host { display: flex; align-items: center; box-sizing: border-box; width: 75px; height: 21px; flex: none; color: #333;
      border: 1px solid ${p ? "#4a98ea" : "#ababab"}; background: linear-gradient(#f7f7f7, #e5e5e5); padding-left: ${ic ? 4 : 0}px; }
    .t { flex: 1; text-align: center; }
  </style>
  ${ic ? `<ep-icon name="${ic}" size="14"></ep-icon>` : ""}<span class="t"><slot></slot></span>`;
});

define("ep-menu", `
  <style>
    :host { position: absolute; left: 829px; top: 118px; width: 77px; height: 63px; box-sizing: border-box; z-index: 6;
      background: #fff; border: 1px solid #a8a8a8; box-shadow: 3px 3px 4px rgba(0,0,0,.45); padding: 1px 1px; }
    .r { display: flex; align-items: center; height: 20px; box-sizing: border-box; position: relative; }
    .g { width: 23px; display: flex; justify-content: center; align-items: center; height: 100%; box-sizing: border-box; margin-right: 3px; }
    .dim { color: #a8a8a8; }
    .dim .g { border-right: 1px solid #e2e2e2; background: #fafafa; }
    .on { background: #cce4f7; border: 1px solid #7db4e0; height: 20px; }
    .on .g { width: 22px; }
  </style>
  <div class="r on"><div class="g"><ep-icon name="doc"></ep-icon></div><span>New</span></div>
  <div class="r dim"><div class="g"><ep-icon name="docEdit"></ep-icon></div><span>Edit</span></div>
  <div class="r dim"><div class="g"><ep-icon name="grayX"></ep-icon></div><span>Delete</span></div>
`);

define("ep-arrow", `
  <style>:host { position: absolute; left: 710px; top: 34px; z-index: 4; display: block; pointer-events: none; }
    svg { display: block; }</style>
  <svg width="122" height="88" viewBox="710 34 122 88">
    <path d="M717 40L805 101" stroke="#f00" stroke-width="6"/>
    <path d="M828 117L797 109L810 92z" fill="#f00"/>
  </svg>
`);
</script>
</body>
</html>
